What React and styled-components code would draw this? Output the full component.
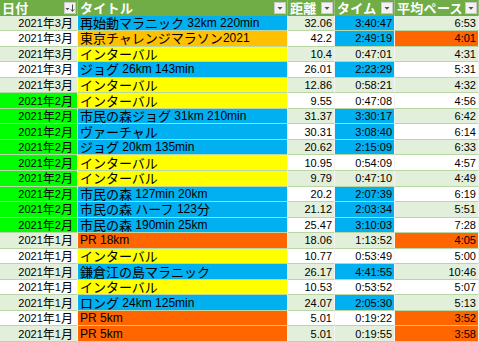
import React from "react";
import styled, { createGlobalStyle } from "styled-components";

const GlobalStyle = createGlobalStyle`
  * { box-sizing: border-box; }
  body {
    margin: 0;
    background: #fff;
    overflow: hidden;
    font-family: "Noto Sans CJK JP", "Liberation Sans", sans-serif;
  }
`;

const COLS = "78px 210px 47px 60px 84px";

const fills = {
  b: "#00b0f0",
  a: "#ffc000",
  y: "#ffff00",
  r: "#ff6600",
};

// date, title, distance, time, pace, title fill
const runs = [
  ["2021年3月", "再始動マラニック 32km 220min", "32.06", "3:40:47", "6:53", "b"],
  ["2021年3月", "東京チャレンジマラソン2021", "42.2", "2:49:19", "4:01", "a"],
  ["2021年3月", "インターバル", "10.4", "0:47:01", "4:31", "y"],
  ["2021年3月", "ジョグ 26km 143min", "26.01", "2:23:29", "5:31", "b"],
  ["2021年3月", "インターバル", "12.86", "0:58:21", "4:32", "y"],
  ["2021年2月", "インターバル", "9.55", "0:47:08", "4:56", "y"],
  ["2021年2月", "市民の森ジョグ 31km 210min", "31.37", "3:30:17", "6:42", "b"],
  ["2021年2月", "ヴァーチャル", "30.31", "3:08:40", "6:14", "b"],
  ["2021年2月", "ジョグ 20km 135min", "20.62", "2:15:09", "6:33", "b"],
  ["2021年2月", "インターバル", "10.95", "0:54:09", "4:57", "y"],
  ["2021年2月", "インターバル", "9.79", "0:47:10", "4:49", "y"],
  ["2021年2月", "市民の森 127min 20km", "20.2", "2:07:39", "6:19", "b"],
  ["2021年2月", "市民の森 ハーフ 123分", "21.12", "2:03:34", "5:51", "b"],
  ["2021年2月", "市民の森 190min 25km", "25.47", "3:10:03", "7:28", "b"],
  ["2021年1月", "PR 18km", "18.06", "1:13:52", "4:05", "r"],
  ["2021年1月", "インターバル", "10.77", "0:53:49", "5:00", "y"],
  ["2021年1月", "鎌倉江の島マラニック", "26.17", "4:41:55", "10:46", "b"],
  ["2021年1月", "インターバル", "10.53", "0:53:52", "5:07", "y"],
  ["2021年1月", "ロング 24km 125min", "24.07", "2:05:30", "5:13", "b"],
  ["2021年1月", "PR 5km", "5.01", "0:19:22", "3:52", "r"],
  ["2021年1月", "PR 5km", "5.01", "0:19:55", "3:58", "r"],
];

const Sheet = styled.div`
  display: grid;
  grid-template-rows: repeat(22, 1fr);
  width: 479px;
  height: 342px;
`;

const Row = styled.div`
  display: grid;
  grid-template-columns: ${COLS};
  min-height: 0;
  background: ${(p) => (p.$band ? "#e2efda" : "#ffffff")};
`;

const HeadRow = styled(Row)`
  background: #70ad47;
`;

const HeadCell = styled.div`
  display: flex;
  align-items: center;
  justify-content: space-between;
  padding: 0 1px 0 2px;
  color: #fff;
  font-weight: 700;
  font-size: 13px;
  line-height: 14px;
  letter-spacing: 0.3px;
  border-right: 1px solid rgba(255, 255, 255, 0.25);
  white-space: nowrap;
  overflow: hidden;
`;

const FilterBtn = styled.span`
  display: flex;
  align-items: center;
  justify-content: center;
  flex: none;
  width: 12px;
  height: 12px;
  background: #f2f2f2;
  border: 1px solid #c9c9c9;
`;

const Cell = styled.div`
  display: flex;
  align-items: center;
  justify-content: ${(p) => (p.$left ? "flex-start" : "flex-end")};
  padding: ${(p) => (p.$left ? "0 2px 0 2px" : "0 2px 0 0")};
  background: ${(p) => p.$fill || "transparent"};
  border-right: 1px solid #f3f3f3;
  border-bottom: 1px solid #b9d7a5;
  color: #000;
  font-size: 13px;
  line-height: 14px;
  white-space: nowrap;
  overflow: hidden;
`;

const DateCell = styled(Cell)`
  font-size: 12px;
  padding-right: 4px;
`;

const Num = styled.span`
  font-family: "Liberation Sans", Arial, sans-serif;
  font-size: 11px;
`;

const Lat = styled.span`
  font-family: "Liberation Sans", Arial, sans-serif;
  font-size: ${(p) => p.$size}px;
  white-space: pre;
`;

// ascii runs get the narrower latin font, the rest stays in the CJK font
const mixed = (s, size) =>
  s
    .split(/([\x20-\x7e]+)/)
    .filter(Boolean)
    .map((part, i) =>
      /^[\x20-\x7e]+$/.test(part) ? (
        <Lat key={i} $size={size}>
          {part}
        </Lat>
      ) : (
        part
      )
    );

const Tri = () => (
  <svg width="8" height="8" viewBox="0 0 8 8">
    <path d="M1.5 3 L6.5 3 L4 5.8 Z" fill="#505050" />
  </svg>
);

const SortTri = () => (
  <svg width="10" height="10" viewBox="0 0 10 10">
    <path d="M0.5 5 L4.5 5 L2.5 7.2 Z" fill="#505050" />
    <path d="M7.5 1.5 V8" stroke="#505050" strokeWidth="1" />
    <path d="M5.8 6.3 L7.5 8.5 L9.2 6.3" stroke="#505050" strokeWidth="1" fill="none" />
  </svg>
);

const toSec = (t) => t.split(":").reduce((a, v) => a * 60 + Number(v), 0);

export default function App() {
  return (
    <>
      <GlobalStyle />
      <Sheet>
        <HeadRow>
          <HeadCell>
            日付
            <FilterBtn>
              <SortTri />
            </FilterBtn>
          </HeadCell>
          <HeadCell>
            タイトル
            <FilterBtn>
              <Tri />
            </FilterBtn>
          </HeadCell>
          <HeadCell>
            距離
            <FilterBtn>
              <Tri />
            </FilterBtn>
          </HeadCell>
          <HeadCell>
            タイム
            <FilterBtn>
              <Tri />
            </FilterBtn>
          </HeadCell>
          <HeadCell>
            平均ペース
            <FilterBtn>
              <Tri />
            </FilterBtn>
          </HeadCell>
        </HeadRow>
        {runs.map(([date, title, dist, time, pace, tf], i) => (
          <Row key={i} $band={i % 2 === 0}>
            <DateCell $fill={date.includes("2月") ? "#00ff00" : null}>
              {mixed(date, 11)}
            </DateCell>
            <Cell $left $fill={fills[tf]}>
              {mixed(title, 12)}
            </Cell>
            <Cell>
              <Num>{dist}</Num>
            </Cell>
            <Cell $fill={toSec(time) >= 7200 ? fills.b : null}>
              <Num>{time}</Num>
            </Cell>
            <Cell $fill={toSec(pace) <= 245 ? fills.r : null}>
              <Num>{pace}</Num>
            </Cell>
          </Row>
        ))}
      </Sheet>
    </>
  );
}
